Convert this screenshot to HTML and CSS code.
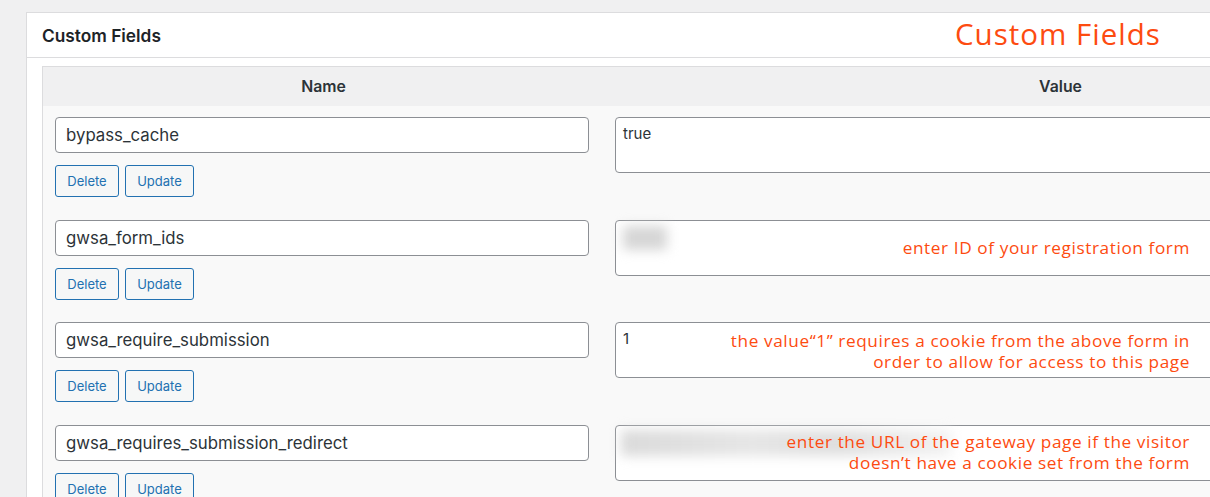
FILE: index.html
```html
<!DOCTYPE html>
<html lang="en">
<head>
<meta charset="utf-8">
<title>Custom Fields</title>
<link rel="stylesheet" href="styles.css">
</head>
<body>
<div class="page">
  <div class="postbox">
    <div class="postbox-header">
      <h2 class="box-title">Custom Fields</h2>
      <span class="callout-title">Custom Fields</span>
    </div>
    <div class="inside">
      <table class="list-table">
        <thead>
          <tr><th class="col-name">Name</th><th class="col-value">Value</th></tr>
        </thead>
        <tbody>
          <tr>
            <td class="cell-name">
              <input class="key-input" type="text" value="bypass_cache">
              <div class="actions"><button class="btn btn-delete">Delete</button><button class="btn btn-update">Update</button></div>
            </td>
            <td class="cell-value">
              <div class="value-wrap"><textarea class="value-input">true</textarea></div>
            </td>
          </tr>
          <tr>
            <td class="cell-name">
              <input class="key-input" type="text" value="gwsa_form_ids">
              <div class="actions"><button class="btn btn-delete">Delete</button><button class="btn btn-update">Update</button></div>
            </td>
            <td class="cell-value">
              <div class="value-wrap">
                <textarea class="value-input"></textarea>
                <div class="blur blur-short"></div>
                <div class="note note-one">enter ID of your registration form</div>
              </div>
            </td>
          </tr>
          <tr>
            <td class="cell-name">
              <input class="key-input" type="text" value="gwsa_require_submission">
              <div class="actions"><button class="btn btn-delete">Delete</button><button class="btn btn-update">Update</button></div>
            </td>
            <td class="cell-value">
              <div class="value-wrap">
                <textarea class="value-input">1</textarea>
                <div class="note note-two">the value“1” requires a cookie from the above form in<br>order to allow for access to this page</div>
              </div>
            </td>
          </tr>
          <tr>
            <td class="cell-name">
              <input class="key-input" type="text" value="gwsa_requires_submission_redirect">
              <div class="actions"><button class="btn btn-delete">Delete</button><button class="btn btn-update">Update</button></div>
            </td>
            <td class="cell-value">
              <div class="value-wrap">
                <textarea class="value-input"></textarea>
                <div class="blur blur-long"></div>
                <div class="note note-three">enter the URL of the gateway page if the visitor<br>doesn’t have a cookie set from the form</div>
              </div>
            </td>
          </tr>
        </tbody>
      </table>
    </div>
  </div>
</div>
</body>
</html>
```

FILE: styles.css
```css
html, body {
  margin: 0;
  padding: 0;
}
body {
  background: #f0f0f1;
  overflow: hidden;
  font-family: Inter, "Liberation Sans", Arial, sans-serif;
  color: #1d2327;
}
.page {
  padding: 12px 0 0 26px;
}
.postbox {
  width: 1506px;
  background: #fff;
  border: 1px solid #dcdcde;
}
.postbox-header {
  height: 44px;
  display: grid;
  grid-template-columns: 913px auto;
  align-items: center;
  padding: 0 15px;
  border-bottom: 1px solid #dcdcde;
}
.box-title {
  margin: 0;
  font-size: 17.3px;
  font-weight: 600;
  color: #1d2327;
}
.callout-title {
  font-family: "Open Sans", Lato, sans-serif;
  font-size: 29.5px;
  letter-spacing: 1px;
  color: #fd4b10;
  line-height: 1;
  margin-top: -3px;
}
.inside {
  padding: 8px 15px 0;
}
.list-table {
  width: 1476px;
  border: 1px solid #dcdcde;
  border-bottom: 0;
  border-spacing: 0;
  table-layout: fixed;
}
.list-table th {
  height: 39px;
  padding: 0;
  background: #f0f0f1;
  font-size: 15.8px;
  font-weight: 600;
  color: #2c3338;
  text-align: center;
}
.col-name {
  width: 561px;
}
.list-table td {
  background: #f9f9f9;
  vertical-align: top;
}
.cell-name {
  padding: 11px 15px 11.7px 12px;
}
.cell-value {
  padding: 11px 0 0 11px;
}
.key-input {
  display: block;
  box-sizing: border-box;
  width: 534px;
  height: 36px;
  margin: 0;
  padding: 0 10px;
  border: 1px solid #8c8f94;
  border-radius: 4px;
  background: #fff;
  font-family: Inter, "Liberation Sans", Arial, sans-serif;
  font-size: 16.8px;
  color: #2c3338;
}
.actions {
  display: flex;
  gap: 6px;
  margin-top: 12px;
}
.btn {
  box-sizing: border-box;
  height: 32px;
  margin: 0;
  border: 1px solid #2271b1;
  border-radius: 3px;
  background: #f6f7f7;
  color: #2271b1;
  font-family: Inter, "Liberation Sans", Arial, sans-serif;
  font-size: 13px;
}
.btn-delete {
  width: 64px;
}
.btn-update {
  width: 69px;
}
.value-wrap {
  position: relative;
  width: 890px;
}
.value-input {
  display: block;
  box-sizing: border-box;
  width: 890px;
  height: 56px;
  margin: 0;
  padding: 6px 7px;
  border: 1px solid #8c8f94;
  border-radius: 4px;
  background: #fff;
  resize: none;
  font-family: Inter, "Liberation Sans", Arial, sans-serif;
  font-size: 15px;
  line-height: 20px;
  color: #2c3338;
}
.blur {
  position: absolute;
  background: #d6d6d6;
  filter: blur(6px);
}
.blur-short {
  left: 8px;
  top: 6px;
  width: 44px;
  height: 24px;
}
.blur-long {
  left: 6px;
  top: 5px;
  width: 330px;
  height: 26px;
  background: linear-gradient(90deg, #dadada 0%, #e6e6e6 40%, #dedede 65%, #f2f2f2 100%);
}
.note {
  position: absolute;
  left: 0;
  width: 575px;
  text-align: right;
  font-family: "Open Sans", Lato, sans-serif;
  font-size: 17.2px;
  letter-spacing: 0.6px;
  line-height: 20.5px;
  color: #fd4b10;
}
.note-one {
  top: 18px;
}
.note-two {
  top: 9px;
}
.note-three {
  top: 7px;
}
```
